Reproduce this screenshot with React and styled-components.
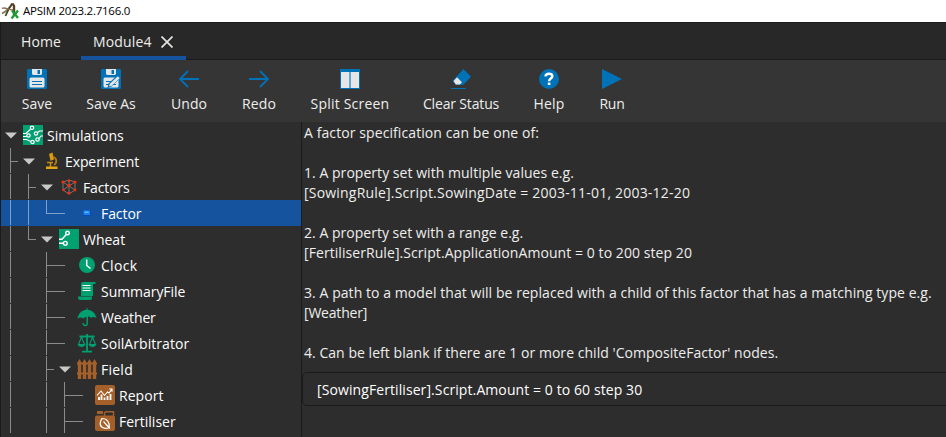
import React from 'react';
import styled, { createGlobalStyle } from 'styled-components';

const BLUE = '#0072b8';
const GREEN = '#00a070';
const BROWN = '#a5602a';

const GlobalStyle = createGlobalStyle`
  *, *::before, *::after { box-sizing: border-box; }
  body {
    margin: 0;
    background: #2d2d2d;
    color: #eeeeec;
    font: 14px/20px "Open Sans", "Noto Sans", sans-serif;
    overflow: hidden;
  }
  svg { display: block; flex: none; }
`;

const Window = styled.div`
  display: flex;
  flex-direction: column;
  width: 946px;
  height: 437px;
  overflow: hidden;
  white-space: pre;
`;

const TitleBar = styled.header`
  display: flex;
  align-items: center;
  height: 22px;
  padding: 0 0 1px 1px;
  gap: 3px;
  background: #fff;
  color: #000;
  font-size: 11.5px;
`;

const Frame = styled.div`
  display: flex;
  flex-direction: column;
  flex: 1;
  min-height: 0;
  border-left: 1px solid #1b1b1b;
`;

const TabBar = styled.nav`
  display: flex;
  height: 38px;
  background: #282828;
  border-top: 1px solid #1b1b1b;
  box-shadow: inset 0 -1px #1b1b1b;
`;

const Tab = styled.div`
  display: flex;
  align-items: center;
  gap: 9px;
  width: ${(p) => p.$width}px;
  padding-top: 4px;
  padding-left: ${(p) => p.$inset}px;
  border-bottom: 4px solid ${(p) => (p.$active ? '#15539e' : 'transparent')};
`;

const Label = styled.span`
  letter-spacing: ${(p) => p.$track || 0}px;
`;

const Toolbar = styled.div`
  display: flex;
  gap: 34px;
  height: 62px;
  padding: 9px 0 0 21px;
  background: #353535;
`;

const ToolButton = styled.div`
  display: flex;
  flex-direction: column;
  align-items: center;
  gap: 5px;
  width: ${(p) => p.$width}px;
`;

const Body = styled.div`
  display: flex;
  flex: 1;
  min-height: 0;
`;

const Tree = styled.div`
  width: 301px;
  flex: none;
  overflow: hidden;
  border-right: 1px solid #1b1b1b;
`;

const TreeRow = styled.div`
  display: flex;
  align-items: center;
  height: 26px;
  color: #fff;
  background: ${(p) => (p.$selected ? '#15539e' : 'transparent')};
`;

const NodeName = styled(Label)`
  padding-top: 2px;
`;

/* One indentation step; draws its part of the connector lines. */
const Guide = styled.span`
  position: relative;
  flex: none;
  width: 18px;
  height: 26px;

  &::before {
    content: '';
    display: ${(p) => (p.$kind === ' ' ? 'none' : 'block')};
    position: absolute;
    left: 9px;
    top: 0;
    width: 1px;
    height: ${(p) => (p.$kind === 'l' ? 14 : 25)}px;
    background: rgba(255, 255, 255, 0.45);
  }
  &::after {
    content: '';
    display: ${(p) => (p.$kind === 't' || p.$kind === 'l' ? 'block' : 'none')};
    position: absolute;
    left: 10px;
    top: 13px;
    width: ${(p) => (p.$long ? 18 : 7)}px;
    height: 1px;
    background: rgba(255, 255, 255, 0.45);
  }
`;

const Expander = styled.span`
  display: flex;
  justify-content: center;
  flex: none;
  width: 18px;
  padding-left: 2px;
`;

const NodeIcon = styled.span`
  margin: 0 4px;
`;

const Main = styled.main`
  flex: 1;
  min-width: 0;
  padding-top: 1px;
`;

const Line = styled.div`
  height: 20px;
  padding-left: 2px;
  letter-spacing: ${(p) => p.$track || 0}px;
`;

const SpecInput = styled.div`
  display: flex;
  align-items: center;
  height: 34px;
  margin-top: 9px;
  margin-right: -8px;
  padding: 2px 0 0 14px;
  border: 1px solid #1b1b1b;
  border-radius: 5px;
  color: #fff;
  letter-spacing: 0.09px;
`;

const Svg = ({ size = 20, children, ...rest }) => (
  <svg width={size} height={size} viewBox={`0 0 ${size} ${size}`} fill="none" {...rest}>
    {children}
  </svg>
);

const AppLogo = () => (
  <svg width="19" height="18" viewBox="0 0 19 18" fill="none">
    <path d="M1 11.5C5 10 9 5 11 1.5" stroke="#8a7450" strokeWidth="1.6" />
    <path d="M4.5 14C6 10 8 6 11.5 1.5" stroke="#3f4a2c" strokeWidth="1.8" />
    <path d="M11.5 1.5L13 4v9" stroke="#5b3d24" strokeWidth="2.4" />
    <path d="M1 6.5c3-2 5 1 11 1.5" stroke="#8a7450" strokeWidth="1.5" />
    <path d="M11 8.500l6 7.500M17 8.500L10.500 16.500" stroke="#1d9a34" strokeWidth="2.300" />
  </svg>
);

const CloseIcon = () => (
  <Svg size={12}>
    <path d="M.5.5l11 11M11.5.5l-11 11" stroke="#e4e4e2" strokeWidth="1.7" />
  </Svg>
);

const Floppy = ({ pencil }) => (
  <Svg>
    <path d="M1 0h18l1 1v18l-1 1H1l-1-1V1z" fill={BLUE} />
    <path d="M5 0h10v5l-1 1H6L5 5z" fill="#e6e6e6" />
    <path d="M10.5 1H13v4h-2.500z" fill={BLUE} />
    <rect x="2.500" y="8.500" width="15" height="10" rx="1.500" fill="#e6e6e6" />
    <path d="M5 12.500h10M5 15.500h10" stroke={BLUE} strokeWidth="1" />
    {pencil && (
      <>
        <path d="M6.500 19l1-4.500 9.500-9 3 3-9.500 9z" fill={BLUE} />
        <path d="M8 17.500l.8-2.700 8-7.500 1.900 1.900-8 7.500z" fill="#e6e6e6" />
      </>
    )}
  </Svg>
);

const UndoIcon = () => (
  <Svg>
    <path d="M20 10H1.200M9 2L1 10l8 8" stroke={BLUE} strokeWidth="1.800" />
  </Svg>
);

const RedoIcon = () => (
  <Svg>
    <path d="M0 10h18.800M11 2l8 8-8 8" stroke={BLUE} strokeWidth="1.800" />
  </Svg>
);

const SplitIcon = () => (
  <Svg>
    <path d="M0 0h20v20H0z" fill={BLUE} />
    <path d="M1 3h18v16H1z" fill="#e6e6e6" />
    <path d="M9 3h2v16H9z" fill="#66a5cf" />
  </Svg>
);

const EraserIcon = () => (
  <Svg>
    <path d="M12.500 0L20 7.800l-8 8.200H5L1.500 12z" fill={BLUE} />
    <path d="M6 8.200l5 5-2 2.300H4.800L2.500 12z" fill="#e6e6e6" />
    <path d="M0 19.500h15" stroke={BLUE} />
  </Svg>
);

const HelpIcon = () => (
  <Svg>
    <circle cx="10" cy="10" r="10" fill={BLUE} />
    <path
      d="M6.400 7.400C6.600 5.500 8 4.700 10 4.700c1.900 0 3.300 1 3.300 2.600 0 2.300-3.200 2.300-3.200 4.900"
      stroke="#fff"
      strokeWidth="2.500"
    />
    <path d="M8.800 13.600h2.600V16H8.800z" fill="#fff" />
  </Svg>
);

const RunIcon = () => (
  <Svg>
    <path d="M0 0l20 10L0 20z" fill={BLUE} />
  </Svg>
);

const SimulationsIcon = () => (
  <Svg>
    <path d="M0 0h20v20H0z" fill={GREEN} />
    <g stroke="#fff" strokeWidth="1.200">
      <circle cx="9" cy="2.800" r="1.700" />
      <circle cx="5.500" cy="10.500" r="1.700" />
      <circle cx="13" cy="8.500" r="1.700" />
      <circle cx="9.500" cy="17" r="1.700" />
      <circle cx="14.500" cy="14.500" r="1.700" />
      <path d="M0 8.500h3l4.500-4.300M0 11.500h3.700M0 14.500h3.500l4.300 2M14.500 7.500l2-1.500H20M16 13.500l2-2.500h2" />
    </g>
  </Svg>
);

const SimulationIcon = () => (
  <Svg>
    <path d="M0 0h20v20H0z" fill={GREEN} />
    <g stroke="#fff" strokeWidth="1.400">
      <circle cx="8.500" cy="4" r="1.800" />
      <circle cx="6.300" cy="14.300" r="1.900" />
      <path d="M0 10.300h3L7.300 5.500M0 14.300h4.300" />
    </g>
  </Svg>
);

const MicroscopeIcon = () => (
  <Svg>
    <path d="M8 3l3.500-1.500 1.500 7-3.500 1.300z" fill="#d99a12" />
    <path d="M12 6c4 1 4.500 5.500 1 8" stroke="#b87a0c" strokeWidth="1.800" />
    <path d="M6 11.500h6M9.500 12v4" stroke="#c98b10" strokeWidth="1.600" />
    <path d="M5 15.500h11.500V18H5z" fill="#e6a515" />
  </Svg>
);

const FactorsIcon = () => (
  <Svg>
    <path d="M4 5l6-2 6 2v8l-6 4-6-4zM4 5l6 4 6-4M10 9v8M4 13l6-4 6 4M10 3v6" stroke="#8b8585" strokeWidth=".8" />
    <g fill="#f0310f">
      <circle cx="4" cy="5" r="1.600" />
      <circle cx="10" cy="3.800" r="1.400" />
      <circle cx="16" cy="5" r="1.600" />
      <circle cx="4.500" cy="13" r="1.300" />
      <circle cx="10" cy="8.500" r="1.700" />
      <circle cx="16" cy="13" r="1.400" />
      <circle cx="10" cy="16" r="1.600" />
    </g>
  </Svg>
);

const FactorIcon = () => (
  <Svg>
    <path d="M6 7h8v6H6z" fill="#0648b4" />
    <path d="M6.500 7.500H13V12H6.500z" fill="#1784f5" />
    <path d="M7.500 8.500h4V10h-4z" fill="#65b8ff" />
  </Svg>
);

const ClockIcon = () => (
  <Svg>
    <circle cx="10" cy="10" r="8" fill={GREEN} />
    <path d="M9.700 4.500v6l3.800 3" stroke="#fff" strokeWidth="1.500" />
  </Svg>
);

const ScrollIcon = () => (
  <Svg>
    <path d="M4 3q0-2 2-2h12.500v2H16v12H4z" fill={GREEN} />
    <path d="M1 15.500h14V17q0 2-2 2H3q-2 0-2-3.500z" fill={GREEN} />
    <path d="M5.500 4.500h8M5.500 7h8M5.500 9.500h8" stroke="#fff" strokeWidth="1.200" />
  </Svg>
);

const UmbrellaIcon = () => (
  <Svg>
    <path d="M.5 11.500C1.500 6 5 3 9.500 2.700V1h1v1.700C15 3 18.500 6 19.500 11c-2-1.500-4-1.500-5.500 0-1.200-1.200-2-1.500-3.200-1.500-1.500 0-3 .5-4 2-2-1.500-4-1.500-6.300 0z" fill={GREEN} />
    <path d="M10.200 9v7.500q0 2-2 2T6 16" stroke={GREEN} strokeWidth="1.400" />
  </Svg>
);

const ScalesIcon = () => (
  <Svg>
    <path d="M10 1v17M2.500 3.500h15M5 18.700h10" stroke={GREEN} strokeWidth="1.800" />
    <path d="M4.500 4L1.500 11.500M4.500 4l3 7.500M15.500 4l-3 7.500M15.500 4l3 7.500" stroke={GREEN} strokeWidth="1.100" />
    <path d="M.5 11h8q-1 3-4 3t-4-3zM11.500 11h8q-1 3-4 3t-4-3z" fill={GREEN} />
  </Svg>
);

const FenceIcon = () => (
  <Svg>
    <path
      d="M.8 20V3l1.700-3 1.700 3v17zM5.800 20V3l1.700-3 1.700 3v17zM10.800 20V3l1.700-3 1.700 3v17zM15.800 20V3l1.700-3 1.700 3v17z"
      fill={BROWN}
    />
    <path d="M0 4.500h20M0 14.500h20" stroke={BROWN} strokeWidth="2" />
  </Svg>
);

const ReportIcon = () => (
  <Svg>
    <rect width="20" height="20" rx="2" fill={BROWN} />
    <path d="M2 10.500L6 6l3.500 4.500 3-3.500 1.500 1 3-4M14.300 4H17v2.700" stroke="#fff" strokeWidth="1.100" />
    <path d="M4 15v-3M6.500 15V9.500M9.500 15v-2.500M12.500 15v-4M15.500 15V9" stroke="#fff" strokeWidth="1.800" />
  </Svg>
);

const FertiliserIcon = () => (
  <Svg>
    <path d="M2 0h6v3H2z" fill={BROWN} />
    <path d="M9.500 6V2.500q0-1.700 2-1.700h7v5" stroke={BROWN} strokeWidth="1.500" />
    <rect y="4.500" width="20" height="15.500" rx="2" fill={BROWN} />
    <path d="M7 7.500c5 0 8 4 7.200 9.200-5 1.800-9.500-.7-9-4.700.2-2 1-3 1.800-4.500zM8.500 10.500l6.300 7" stroke="#fff" strokeWidth="1.200" />
  </Svg>
);

const tabs = [
  { name: 'Home', width: 80, inset: 20, track: 0.1 },
  { name: 'Module4', width: 105, inset: 12, track: 0.15, active: true },
];

const tools = [
  { name: 'Save', icon: <Floppy />, width: 30 },
  { name: 'Save As', icon: <Floppy pencil />, width: 50 },
  { name: 'Undo', icon: <UndoIcon />, width: 38, track: 0.1 },
  { name: 'Redo', icon: <RedoIcon />, width: 34, track: 0.1 },
  { name: 'Split Screen', icon: <SplitIcon />, width: 80, track: 0.2 },
  { name: 'Clear Status', icon: <EraserIcon />, width: 74, track: -0.15 },
  { name: 'Help', icon: <HelpIcon />, width: 34, track: 0.2 },
  { name: 'Run', icon: <RunIcon />, width: 24, track: -0.2 },
];

/* guides: v = line passing by, t = branch, l = last branch, space = nothing */
const nodes = [
  { name: 'Simulations', guides: '', icon: <SimulationsIcon />, open: true, track: 0.05 },
  { name: 'Experiment', guides: 't', icon: <MicroscopeIcon />, open: true, track: -0.1 },
  { name: 'Factors', guides: 'vt', icon: <FactorsIcon />, open: true, track: -0.12 },
  { name: 'Factor', guides: 'vvl', icon: <FactorIcon />, selected: true, track: -0.08 },
  { name: 'Wheat', guides: 'vl', icon: <SimulationIcon />, open: true },
  { name: 'Clock', guides: 'v t', icon: <ClockIcon />, track: 0.3 },
  { name: 'SummaryFile', guides: 'v t', icon: <ScrollIcon />, track: -0.05 },
  { name: 'Weather', guides: 'v t', icon: <UmbrellaIcon />, track: -0.15 },
  { name: 'SoilArbitrator', guides: 'v t', icon: <ScalesIcon />, track: 0.05 },
  { name: 'Field', guides: 'v t', icon: <FenceIcon />, open: true, track: 0.25 },
  { name: 'Report', guides: 'v vt', icon: <ReportIcon />, track: 0.05 },
  { name: 'Fertiliser', guides: 'v vt', icon: <FertiliserIcon /> },
];

const lines = [
  ['A factor specification can be one of:', 0.09],
  [''],
  ['1. A property set with multiple values e.g.', 0.04],
  ['[SowingRule].Script.SowingDate = 2003-11-01, 2003-12-20', 0.2],
  [''],
  ['2. A property set with a range e.g.', 0.02],
  ['[FertiliserRule].Script.ApplicationAmount = 0 to 200 step 20', 0.07],
  [''],
  ['3. A path to a model that will be replaced with a child of this factor that has a matching type e.g.', 0.065],
  ['[Weather]', -0.2],
  [''],
  ["4. Can be left blank if there are 1 or more child 'CompositeFactor' nodes.", 0.04],
];

export default function App() {
  return (
    <Window>
      <GlobalStyle />
      <TitleBar>
        <AppLogo />
        <Label $track={-0.25}>APSIM 2023.2.7166.0</Label>
      </TitleBar>
      <Frame>
        <TabBar>
          {tabs.map((t) => (
            <Tab key={t.name} $width={t.width} $inset={t.inset} $active={t.active}>
              <Label $track={t.track}>{t.name}</Label>
              {t.active && <CloseIcon />}
            </Tab>
          ))}
        </TabBar>
        <Toolbar>
          {tools.map((t) => (
            <ToolButton key={t.name} $width={t.width}>
              {t.icon}
              <Label $track={t.track}>{t.name}</Label>
            </ToolButton>
          ))}
        </Toolbar>
        <Body>
          <Tree>
            {nodes.map((n) => (
              <TreeRow key={n.name} $selected={n.selected}>
                {[...n.guides].map((kind, i) => (
                  <Guide key={i} $kind={kind} $long={!n.open} />
                ))}
                {n.open ? (
                  <Expander>
                    <svg width="12" height="7" viewBox="0 0 12 7">
                      <path d="M0 .5h12L6 6.500z" fill="#c8c8c6" />
                    </svg>
                  </Expander>
                ) : (
                  <Guide $kind=" " />
                )}
                <NodeIcon>{n.icon}</NodeIcon>
                <NodeName $track={n.track}>{n.name}</NodeName>
              </TreeRow>
            ))}
          </Tree>
          <Main>
            {lines.map(([text, track], i) => (
              <Line key={i} $track={track}>{text}</Line>
            ))}
            <SpecInput>[SowingFertiliser].Script.Amount = 0 to 60 step 30</SpecInput>
          </Main>
        </Body>
      </Frame>
    </Window>
  );
}
